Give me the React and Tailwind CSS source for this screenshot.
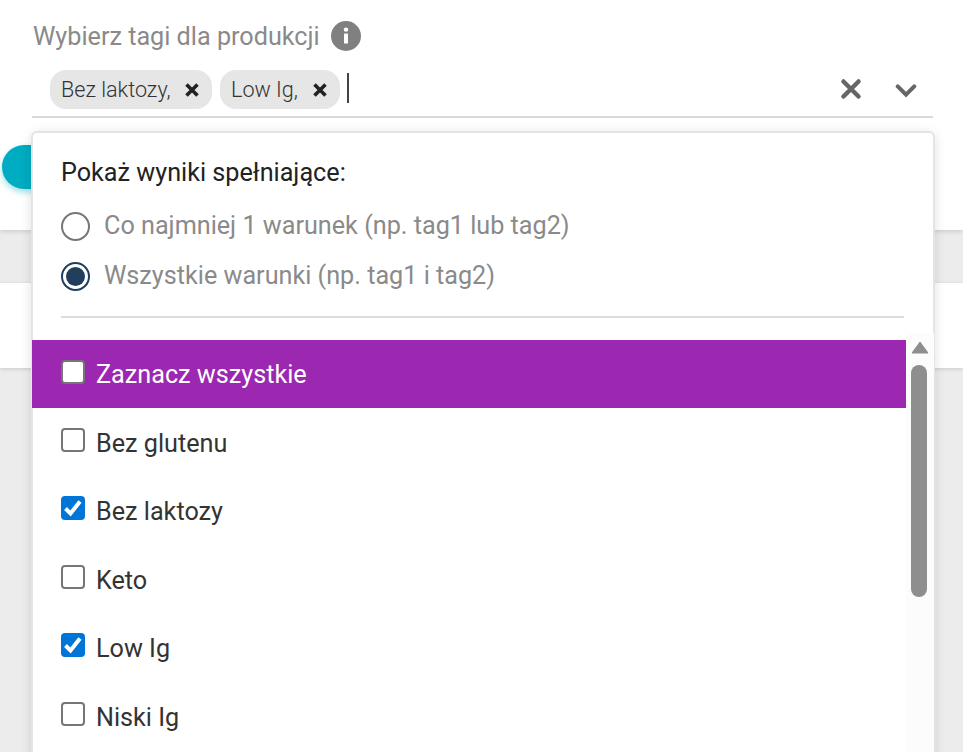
import React from 'react';

const tags = [
    { name: 'Bez laktozy,', width: 'w-[162px]' },
    { name: 'Low Ig,', width: 'w-[120px]' },
];

const options = [
    { name: 'Bez glutenu', checked: false },
    { name: 'Bez laktozy', checked: true },
    { name: 'Keto', checked: false },
    { name: 'Low Ig', checked: true },
    { name: 'Niski Ig', checked: false },
];

function Cross({ className, weight = 3.2, cap = 'round' }) {
    return (
        <svg viewBox="0 0 16 16" className={className} fill="none" stroke="currentColor" strokeWidth={weight} strokeLinecap={cap}>
            <path d="M2.5 2.5l11 11M13.5 2.5l-11 11" />
        </svg>
    );
}

function Checkbox({ checked }) {
    if (checked) {
        return (
            <span className="mb-[5px] flex h-[24px] w-[24px] shrink-0 items-center justify-center rounded-[4px] bg-[#0075d8]">
                <svg viewBox="0 0 24 24" className="h-[24px] w-[24px]" fill="none" stroke="#fff" strokeWidth="4">
                    <path d="M4.5 12.5l5 5 9.5-12" />
                </svg>
            </span>
        );
    }
    return <span className="mb-[5px] h-[24px] w-[24px] shrink-0 rounded-[4px] border-2 border-[#767676] bg-white" />;
}

function Radio({ checked, label }) {
    return (
        <div className="flex h-[50px] items-center gap-[14px]">
            {checked ? (
                <span className="flex h-[29px] w-[29px] items-center justify-center rounded-full border-2 border-[#203f5c]">
                    <span className="h-[19px] w-[19px] rounded-full bg-[#203f5c]" />
                </span>
            ) : (
                <span className="h-[29px] w-[29px] rounded-full border-2 border-[#767676]" />
            )}
            <span className="text-[25.2px] text-[#8a8a8a]">{label}</span>
        </div>
    );
}

export default function App() {
    return (
        <div className="relative flex h-[752px] w-[963px] flex-col overflow-hidden bg-[#ececec] font-['Roboto',sans-serif]">
            <div className="h-[230px] shrink-0 bg-white pl-[32px] pr-[30px] shadow-[0_2px_4px_rgba(0,0,0,0.12)]">
                <div className="flex h-[72px] items-center pt-[2px]">
                    <span className="ml-[1px] text-[25.2px] text-[#8a8a8a]">Wybierz tagi dla produkcji</span>
                    <span className="ml-[11px] flex h-[30px] w-[30px] -translate-y-[1px] items-center justify-center rounded-full bg-[#808080]">
                        <svg viewBox="0 0 10 20" className="h-[20px] w-[10px]" fill="#fff">
                            <circle cx="5" cy="3.6" r="2.2" />
                            <rect x="3" y="7.6" width="4" height="10" rx="0.6" />
                        </svg>
                    </span>
                </div>
                <div className="flex h-[46px] items-start border-b-2 border-[#d9d9d9]">
                    <div className="ml-[18px] mt-[-2px] flex items-center gap-[7px]">
                        {tags.map((tag) => (
                            <span key={tag.name} className={`mr-[1px] flex h-[39px] items-center justify-between rounded-[16px] bg-[#e6e6e6] pl-[11px] pr-[12px] ${tag.width}`}>
                                <span className="mt-[2px] text-[21.6px] font-light text-[#333333]">{tag.name}</span>
                                <Cross className="h-[16px] w-[16px] text-[#222222]" weight={3.6} cap="butt" />
                            </span>
                        ))}
                        <span className="mb-[3px] ml-[-1px] h-[30px] w-[2px] bg-[#444444]" />
                    </div>
                    <div className="ml-auto flex items-center gap-[33px] pr-[16px] pt-[6px] text-[#666666]">
                        <Cross className="h-[22px] w-[22px]" />
                        <svg viewBox="0 0 24 16" className="mt-[3px] h-[16px] w-[22px]" fill="none" stroke="currentColor" strokeWidth="4.4" strokeLinecap="round">
                            <path d="M3 3l9 9 9-9" />
                        </svg>
                    </div>
                </div>
                <button className="ml-[-30px] mt-[27px] h-[44px] w-[120px] rounded-l-[22px] bg-[#00acc1] shadow-[0_3px_6px_rgba(0,172,193,0.4)]" />
            </div>
            <div className="mt-[53px] h-[85px] shrink-0 bg-white shadow-[0_1px_4px_rgba(0,0,0,0.15)]" />

            <div className="absolute left-[31px] top-[131px] flex h-[640px] w-[904px] flex-col rounded-t-[6px] border-2 border-b-0 border-[#e4e4e4] bg-white shadow-[0_2px_12px_rgba(0,0,0,0.12)]">
                <div className="mx-[-1px] pl-[29px] pr-[30px]">
                    <div className="mt-[24px] text-[25.2px] leading-[32px] text-[#222222]">Pokaż wyniki spełniające:</div>
                    <div className="mt-[12px] border-b-2 border-[#dcdcdc] pb-[15px]">
                        <Radio label="Co najmniej 1 warunek (np. tag1 lub tag2)" />
                        <Radio checked label="Wszystkie warunki (np. tag1 i tag2)" />
                    </div>
                </div>
                <div className="mx-[-1px] mt-[15px] flex min-h-0 flex-1">
                    <div className="min-w-0 flex-1 pt-[7px]">
                        <div className="flex h-[68px] items-center gap-[11px] bg-[#9c27b0] pl-[29px]">
                            <Checkbox checked={false} />
                            <span className="mt-[2px] text-[25.2px] text-white">Zaznacz wszystkie</span>
                        </div>
                        {options.map((option) => (
                            <div key={option.name} className="flex h-[68.5px] items-center gap-[11px] pl-[29px]">
                                <Checkbox checked={option.checked} />
                                <span className="mt-[3px] text-[25.2px] text-[#333333]">{option.name}</span>
                            </div>
                        ))}
                    </div>
                    <div className="flex w-[28px] shrink-0 flex-col items-start bg-[#fcfcfc] pl-[5px] pt-[8px]">
                        <svg viewBox="0 0 18 13" className="h-[13px] w-[18px]" fill="#8e8e8e">
                            <path d="M9 1l8 11H1z" stroke="#8e8e8e" strokeLinejoin="round" />
                        </svg>
                        <div className="mt-[11px] h-[232px] w-[16px] rounded-full bg-[#8e8e8e]" />
                    </div>
                </div>
            </div>
        </div>
    );
}
